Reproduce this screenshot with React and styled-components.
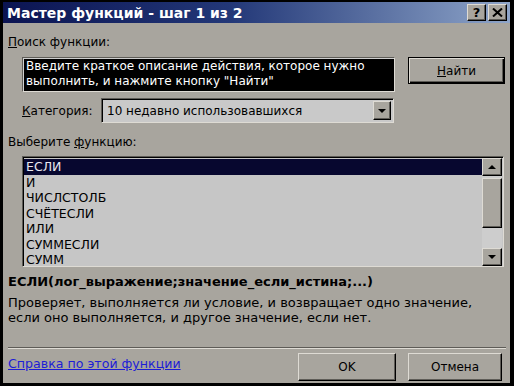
import React from 'react';
import styled, { createGlobalStyle } from 'styled-components';

const GlobalStyle = createGlobalStyle`
  html, body {
    margin: 0;
    padding: 0;
    background: #000;
  }
  * {
    box-sizing: border-box;
  }
`;

const face = '#a8a59e';
const light = '#dedbd4';
const shadow = '#5e5c57';
const font = '"DejaVu Sans", Verdana, sans-serif';

const Window = styled.div`
  width: 514px;
  height: 386px;
  background: ${face};
  border: 3px solid #000;
  border-top-width: 2px;
  border-right-width: 4px;
  display: flex;
  flex-direction: column;
  font-family: ${font};
  font-size: 12px;
  color: #000;
  overflow: hidden;
`;

const TitleBar = styled.div`
  height: 21px;
  display: flex;
  align-items: center;
  padding: 0 3px 0 4px;
  background: linear-gradient(to right, #0b1452 0%, #233878 45%, #8ea5c9 100%);
`;

const Title = styled.div`
  flex: 1;
  color: #fff;
  font-weight: bold;
  font-size: 14px;
`;

const CaptionButton = styled.div`
  width: 19px;
  height: 17px;
  margin-left: ${p => (p.$gap ? '2px' : '0')};
  background: ${face};
  border: 1px solid;
  border-color: ${light} #000 #000 ${light};
  box-shadow: inset -1px -1px 0 ${shadow};
  display: flex;
  align-items: center;
  justify-content: center;
  font-weight: bold;
  font-size: 13px;
  line-height: 1;
  color: #000;
`;

const Body = styled.div`
  flex: 1;
  display: flex;
  flex-direction: column;
  padding: 12px 3px 0 5px;
`;

const Label = styled.div`
  height: 15px;
  line-height: 15px;
  white-space: nowrap;
  margin-top: ${p => p.$top || 0}px;
`;

const Key = styled.span`
  text-decoration: underline;
`;

const Indented = styled.div`
  padding-left: 14px;
  display: flex;
  align-items: ${p => p.$align || 'flex-start'};
  margin-top: ${p => p.$top || 0}px;
`;

const SearchBox = styled.div`
  width: 373px;
  height: 35px;
  background: #000;
  color: #fff;
  border: 1px solid;
  border-color: ${shadow} ${light} ${light} ${shadow};
  box-shadow: inset 1px 1px 0 #cfcfcf;
  padding: 1px 3px;
  line-height: 15px;
  white-space: nowrap;
`;

const Button = styled.div`
  width: ${p => p.$w}px;
  height: ${p => p.$h || 28}px;
  margin-left: ${p => p.$left || 0}px;
  background: ${face};
  border: 1px solid ${p => (p.$default ? '#000' : light)};
  border-right-color: #000;
  border-bottom-color: #000;
  box-shadow: ${p =>
    p.$default
      ? `inset 1px 1px 0 ${light}, inset -1px -1px 0 #000, inset -2px -2px 0 ${shadow}`
      : `inset -1px -1px 0 ${shadow}`};
  display: flex;
  align-items: center;
  justify-content: center;
  flex-shrink: 0;
`;

const ComboLabel = styled.div`
  width: 79px;
`;

const Combo = styled.div`
  width: 293px;
  height: 25px;
  background: #c9c9c9;
  border: 1px solid;
  border-color: ${shadow} ${light} ${light} ${shadow};
  box-shadow: inset 1px 1px 0 #000;
  display: flex;
  align-items: center;
  padding: 2px 2px 2px 5px;
`;

const ComboText = styled.div`
  flex: 1;
`;

const ArrowBox = styled.div`
  width: 18px;
  height: 19px;
  background: ${face};
  border: 1px solid;
  border-color: ${light} #000 #000 ${light};
  box-shadow: inset -1px -1px 0 ${shadow};
  display: flex;
  align-items: center;
  justify-content: center;
`;

const Arrow = styled.div`
  width: 0;
  height: 0;
  border-left: 4px solid transparent;
  border-right: 4px solid transparent;
  ${p => (p.$up ? 'border-bottom: 4px solid #000;' : 'border-top: 4px solid #000;')}
`;

const ListBox = styled.div`
  margin-top: 6px;
  width: 482px;
  height: 111px;
  background: #c6c6c6;
  border: 1px solid;
  border-color: ${shadow} ${light} ${light} ${shadow};
  box-shadow: inset 1px 1px 0 #000;
  display: flex;
  padding: 1px 1px 0 1px;
`;

const Items = styled.div`
  flex: 1;
  padding-top: 1px;
  font-size: 12.5px;
`;

const Item = styled.div`
  height: 15.5px;
  line-height: 15.5px;
  padding-left: 2px;
  background: ${p => (p.$selected ? '#07072f' : 'transparent')};
  color: ${p => (p.$selected ? '#e8e8f0' : '#000')};
`;

const ScrollBar = styled.div`
  width: 20px;
  display: flex;
  flex-direction: column;
  background: #cdcdcd;
`;

const ScrollButton = styled(ArrowBox)`
  width: 20px;
  height: 18px;
`;

const Thumb = styled.div`
  height: 50px;
  margin-top: 2px;
  background: ${face};
  border: 1px solid;
  border-color: ${light} #000 #000 ${light};
  box-shadow: inset -1px -1px 0 ${shadow};
`;

const Track = styled.div`
  flex: 1;
`;

const Signature = styled.div`
  margin-top: 7px;
  font-weight: bold;
  font-size: 13px;
  line-height: 16px;
`;

const Description = styled.div`
  margin-top: 5px;
  font-size: 13px;
  line-height: 15px;
`;

const Separator = styled.div`
  margin-top: 22px;
  width: 498px;
  border-top: 1px solid ${shadow};
  border-bottom: 1px solid ${light};
`;

const Footer = styled.div`
  display: flex;
  align-items: flex-start;
  margin-top: 4px;
`;

const HelpLink = styled.a`
  color: #1d1dd6;
  text-decoration: underline;
  font-size: 12.6px;
  margin-top: 3px;
  width: 290px;
`;

const functions = ['ЕСЛИ', 'И', 'ЧИСЛСТОЛБ', 'СЧЁТЕСЛИ', 'ИЛИ', 'СУММЕСЛИ', 'СУММ'];

const CloseIcon = () => (
  <svg width="11" height="9" viewBox="0 0 11 9">
    <path d="M1 0.5 L10 8.5 M10 0.5 L1 8.5" stroke="#000" strokeWidth="2" />
  </svg>
);

export default function App() {
  return (
    <>
      <GlobalStyle />
      <Window>
        <TitleBar>
          <Title>Мастер функций - шаг 1 из 2</Title>
          <CaptionButton>?</CaptionButton>
          <CaptionButton $gap><CloseIcon /></CaptionButton>
        </TitleBar>
        <Body>
          <Label><Key>П</Key>оиск функции:</Label>
          <Indented $top={7}>
            <SearchBox>
              Введите краткое описание действия, которое нужно
              <br />
              выполнить, и нажмите кнопку "Найти"
            </SearchBox>
            <Button $w={97} $h={27} $left={13} $default>
              <span><Key>Н</Key>айти</span>
            </Button>
          </Indented>
          <Indented $top={6} $align="center">
            <ComboLabel><Key>К</Key>атегория:</ComboLabel>
            <Combo>
              <ComboText>10 недавно использовавшихся</ComboText>
              <ArrowBox><Arrow /></ArrowBox>
            </Combo>
          </Indented>
          <Label $top={12}>Выберите <Key>ф</Key>ункцию:</Label>
          <Indented>
            <ListBox>
              <Items>
                {functions.map((f, i) => (
                  <Item key={f} $selected={i === 0}>{f}</Item>
                ))}
              </Items>
              <ScrollBar>
                <ScrollButton><Arrow $up /></ScrollButton>
                <Thumb />
                <Track />
                <ScrollButton><Arrow /></ScrollButton>
              </ScrollBar>
            </ListBox>
          </Indented>
          <Signature>ЕСЛИ(лог_выражение;значение_если_истина;...)</Signature>
          <Description>
            Проверяет, выполняется ли условие, и возвращает одно значение,
            <br />
            если оно выполняется, и другое значение, если нет.
          </Description>
          <Separator />
          <Footer>
            <HelpLink href="#">Справка по этой функции</HelpLink>
            <Button $w={98}>OK</Button>
            <Button $w={94} $left={12}>Отмена</Button>
          </Footer>
        </Body>
      </Window>
    </>
  );
}
